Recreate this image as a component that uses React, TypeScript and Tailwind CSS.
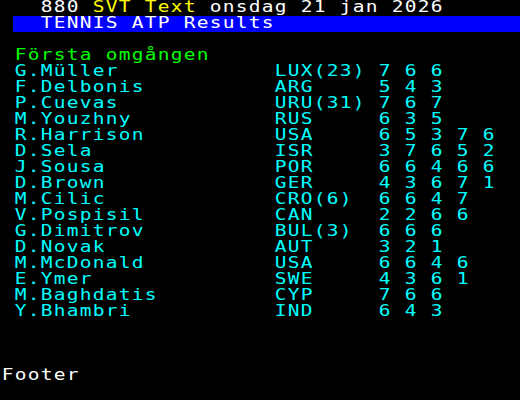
import React from "react";

type Seg = { t: string; c: string; col?: number };

const W = "text-white";
const Y = "text-[#ffff00]";
const C = "text-[#00ffff]";
const G = "text-[#00ff00]";

function buildCells(segs: Seg[]) {
  const cells: { ch: string; c: string }[] = Array.from({ length: 40 }, () => ({ ch: " ", c: W }));
  let pos = 0;
  for (const s of segs) {
    if (s.col !== undefined) pos = s.col;
    for (const ch of Array.from(s.t)) {
      if (pos < 40) cells[pos] = { ch, c: s.c };
      pos++;
    }
  }
  return cells;
}

function Row({ segs, bar }: { segs: Seg[]; bar?: boolean }) {
  const cells = buildCells(segs);
  return (
    <div className="flex h-4">
      {cells.map((cell, i) => (
        <span
          key={i}
          className={`flex h-4 w-[13px] shrink-0 items-start justify-center pl-[2px] ${
            bar && i >= 1 ? "bg-[#0000ff]" : ""
          }`}
        >
          <span
            className={`block scale-x-[1.3] whitespace-pre text-[15px] leading-[14px] ${cell.c}`}
          >
            {cell.ch}
          </span>
        </span>
      ))}
    </div>
  );
}

const players: [string, string, string[]][] = [
  ["G.Müller", "LUX(23)", ["7", "6", "6"]],
  ["F.Delbonis", "ARG", ["5", "4", "3"]],
  ["P.Cuevas", "URU(31)", ["7", "6", "7"]],
  ["M.Youzhny", "RUS", ["6", "3", "5"]],
  ["R.Harrison", "USA", ["6", "5", "3", "7", "6"]],
  ["D.Sela", "ISR", ["3", "7", "6", "5", "2"]],
  ["J.Sousa", "POR", ["6", "6", "4", "6", "6"]],
  ["D.Brown", "GER", ["4", "3", "6", "7", "1"]],
  ["M.Cilic", "CRO(6)", ["6", "6", "4", "7"]],
  ["V.Pospisil", "CAN", ["2", "2", "6", "6"]],
  ["G.Dimitrov", "BUL(3)", ["6", "6", "6"]],
  ["D.Novak", "AUT", ["3", "2", "1"]],
  ["M.McDonald", "USA", ["6", "6", "4", "6"]],
  ["E.Ymer", "SWE", ["4", "3", "6", "1"]],
  ["M.Baghdatis", "CYP", ["7", "6", "6"]],
  ["Y.Bhambri", "IND", ["6", "4", "3"]],
];

export default function App() {
  return (
    <div className="h-[400px] w-[520px] overflow-hidden bg-black font-['DejaVu_Sans_Mono',monospace]">
      <Row
        segs={[
          { t: "880", c: W, col: 3 },
          { t: "SVT Text", c: Y, col: 7 },
          { t: "onsdag 21 jan 2026", c: W, col: 16 },
        ]}
      />
      <Row bar segs={[{ t: "TENNIS ATP Results", c: W, col: 3 }]} />
      <Row segs={[]} />
      <Row segs={[{ t: "Första omgången", c: G, col: 1 }]} />
      {players.map(([name, country, scores]) => (
        <Row
          key={name}
          segs={[
            { t: name, c: C, col: 1 },
            { t: country, c: C, col: 21 },
            { t: scores.join(" "), c: C, col: 29 },
          ]}
        />
      ))}
      <Row segs={[]} />
      <Row segs={[]} />
      <Row segs={[]} />
      <Row segs={[{ t: "Footer", c: W, col: 0 }]} />
    </div>
  );
}
